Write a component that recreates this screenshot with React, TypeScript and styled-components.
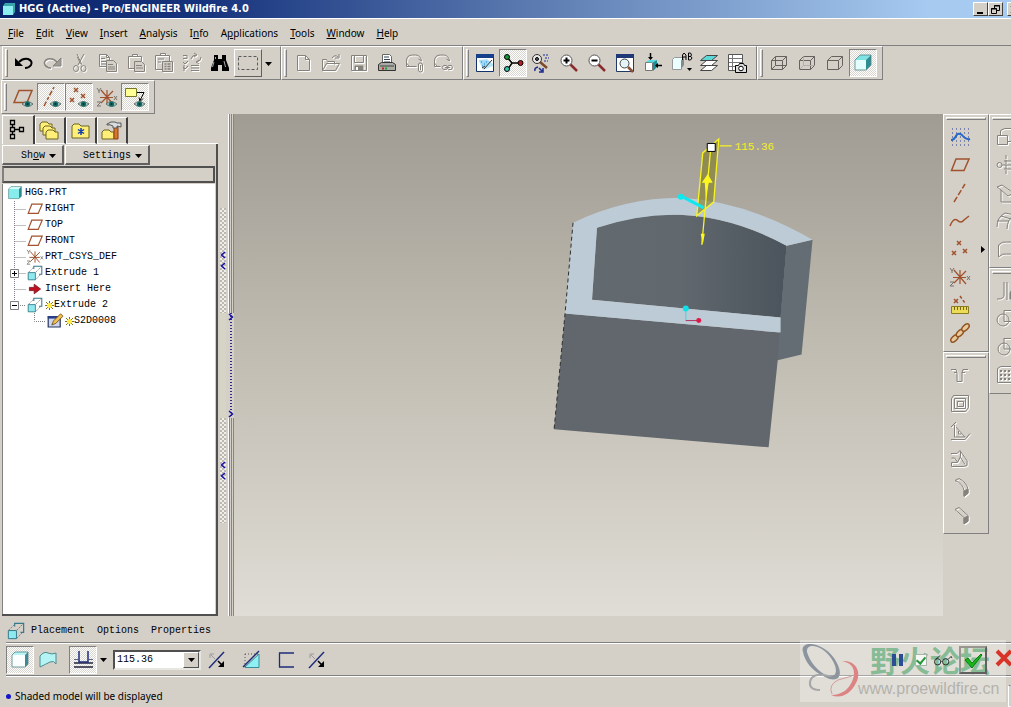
import React from "react";
import styled, { createGlobalStyle, css } from "styled-components";

const face = "#d4d0c8";
const shade = "#808080";
const uiFont = '"Noto Sans", Tahoma, sans-serif';
const monoFont = '"Liberation Mono", "Courier New", monospace';

const GlobalStyle = createGlobalStyle`
  * { box-sizing: border-box; }
  body { margin: 0; background: ${face}; font: 10px/14px ${uiFont}; color: #000; overflow: hidden; }
  button, select { font: inherit; color: inherit; margin: 0; padding: 0; border: 0; background: none; border-radius: 0; }
  svg { display: block; flex: none; }
`;

const dither = css`
  background: repeating-conic-gradient(#fff 0 25%, #d8d5ce 0 50%) 0 0 / 2px 2px;
`;

/* ---------- shell ---------- */

const Window = styled.div`
  position: relative;
  display: flex;
  flex-direction: column;
  height: 100vh;
  min-height: 560px;
  overflow: hidden;
`;

const TitleBar = styled.header`
  display: flex;
  align-items: center;
  height: 19px;
  padding-left: 2px;
  gap: 3px;
  border-bottom: 1px solid #fff;
  background: linear-gradient(90deg, #0a246a, #16337d 20%, #6080b4 55%, #a6caf0 92%);
  color: #fff;
`;

const Title = styled.h1`
  flex: 1;
  margin: 0;
  font: bold 11px/16px "DejaVu Sans Condensed", Tahoma, sans-serif;
  white-space: nowrap;
`;

const Controls = styled.div`
  display: flex;
  width: 38px;
  overflow: hidden;
`;

const ControlButton = styled.button<{ $apart?: boolean }>`
  flex: none;
  display: grid;
  place-items: center;
  width: 15px;
  height: 14px;
  margin-left: ${(p) => (p.$apart ? 4 : 0)}px;
  background: ${face};
  border: 1px solid;
  border-color: #fff #404040 #404040 #fff;
`;

const MenuBar = styled.nav`
  display: flex;
  align-items: center;
  height: 26px;
  padding: 2px 2px 0;
`;

const MenuItem = styled.button`
  padding: 0 6px;
  line-height: 16px;
`;

const ToolRow = styled.div<{ $second?: boolean }>`
  display: flex;
  height: ${(p) => (p.$second ? 34 : 35)}px;
  padding-left: ${(p) => (p.$second ? 1 : 2)}px;
  border-top: ${(p) => (p.$second ? 0 : 1)}px solid ${shade};
`;

const ToolGroup = styled.div`
  display: flex;
  align-items: center;
  padding: 0 5px 0 2px;
  border: 1px solid;
  border-color: #fff ${shade} ${shade} #fff;
`;

const Handle = styled.span`
  width: 3px;
  height: 28px;
  margin-right: 2px;
  border: 1px solid;
  border-color: #fff ${shade} ${shade} #fff;
`;

const ToolButton = styled.button<{ $on?: boolean; $raised?: boolean; $wide?: boolean }>`
  display: grid;
  flex: none;
  place-items: center;
  width: ${(p) => (p.$wide ? 32 : 28)}px;
  height: 28px;
  ${(p) => p.$on && dither}
  ${(p) => p.$on && css`border: 1px solid; border-color: ${shade} #fff #fff ${shade};`}
  ${(p) => p.$raised && css`border: 1px solid; border-color: #fff #606060 #606060 #fff;`}
`;

const AcceptButton = styled(ToolButton)`
  border: 2px solid;
  border-color: #98968f #606060 #606060 #98968f;
`;

const DropArrow = styled.button`
  display: grid;
  place-items: center;
  width: 13px;
  height: 28px;
`;

const Main = styled.main`
  display: flex;
  flex: 1;
  min-height: 0;
`;

/* ---------- icons ---------- */

const Glyph = styled.svg<{ $dim?: boolean }>`
  fill: none;
  stroke: ${(p) => (p.$dim ? "#85827c" : "#000")};
  stroke-width: 1;
  overflow: visible;
  ${(p) => p.$dim && css`filter: drop-shadow(1px 1px 0 #fff);`}
`;

const brown = "#a0522d";
const navy = "#1c2c7c";

const Eye = () => (
  <g stroke="none">
    <path d="M9 17q5-5 11 0q-5 5-11 0z" fill="#a9c4c0" stroke="#44605c" strokeWidth=".8" />
    <circle cx="14.500" cy="17" r="2.600" fill="#0f6b66" />
    <circle cx="14.500" cy="17" r="1" fill="#02302e" />
  </g>
);

const Crosses = ({ pts, c = brown }: { pts: number[][]; c?: string }) => (
  <path stroke={c} strokeWidth="1.500" d={pts.map(([x, y]) => `M${x - 2} ${y - 2}l4 4m0-4l-4 4`).join("")} />
);

const WireCube = ({ hidden }: { hidden: number }) => (
  <g stroke="#66635e">
    <path d="M2.500 7.500h11v9h-11zM2.500 7.500l4-4h11v9l-4 4M13.500 7.500l4-4" />
    {hidden > 0 && <path d="M6.500 3.500v9h11M6.500 12.500l-4 4" stroke={hidden > 1 ? "#66635e" : "#b4b0a8"} />}
  </g>
);

const Cube = ({ front, top, side, depth = 4 }: { front: string; top: string; side: string; depth?: number }) => {
  const x = 18 - depth;
  return (
    <g stroke="none">
      <path d={`M2 ${2 + depth}H${x}V17H2z`} fill={front} />
      <path d={`M2 ${2 + depth}L${2 + depth} 2H18L${x} ${2 + depth}z`} fill={top} />
      <path d={`M${x} ${2 + depth}L18 2V${17 - depth}L${x} 17z`} fill={side} />
      <path
        d={`M2 ${2 + depth}V17H${x}L18 ${17 - depth}V2H${2 + depth}z`}
        fill="none"
        stroke="#4e8488"
        strokeWidth=".8"
      />
    </g>
  );
};

const Extrude = () => (
  <g>
    <path d="M8.500 5V1.500h10v10H15" stroke="#34788c" strokeWidth="1.300" />
    <path d="M2 9l6-6M11 9l7-7M11 18l7-7" stroke="#6c7c84" strokeDasharray="2 1" />
    <path d="M1.500 9.500h9v9h-9z" fill="#8feaf0" stroke="#2a6f80" />
  </g>
);

const Csys = () => (
  <g>
    <path d="M4 3l12 14M16 4L4 16M3 10.500h13M10 3v14" stroke={brown} strokeWidth="1.200" />
    <path d="M0 1l2 3 2-3M2 4v2M17 9l3 4m0-4l-3 4M0 15h4l-4 4h4" stroke="#77736c" />
  </g>
);

const Folder = ({ x = 0, y = 0, w = 16, h = 12 }) => (
  <path
    d={`M${x} ${y + h}v-${h - 2}l2-2h5l2 2h${w - 9}v${h - 2}z`}
    fill="#ffee78"
    stroke="#6b6420"
  />
);

const Magnifier = ({ sign }: { sign: string }) => (
  <g>
    <path d="M11 11l7 7" stroke="#8b2c2c" strokeWidth="2.500" />
    <circle cx="7.500" cy="7.500" r="5.500" fill="#fff" stroke="#555" />
    <path d={sign} strokeWidth="2" />
  </g>
);

const Flip = () => (
  <g>
    <path d="M2 18L17 2" stroke={navy} strokeWidth="1.500" />
    <path d="M4 5l4 4M3 8V4h4" stroke="#999" />
    <path d="M11 11l5 5" strokeWidth="1.500" />
    <path d="M17 11v6h-6z" fill="#000" stroke="none" />
  </g>
);

const icons: Record<string, React.ReactNode> = {
  undo: <g><path d="M5 9q4-4 9-3q5 2 3 6q-2 3-6 3" strokeWidth="2" /><path d="M1 5v8h8z" fill="#000" stroke="none" /></g>,
  redo: <g><path d="M15 9q-4-4-9-3q-5 2-3 6q2 3 6 3" strokeWidth="1.500" /><path d="M19 5v8h-8z" fill="#a09c94" /></g>,
  cut: <g><path d="M7 1l5 11M14 1L8 12M7.500 4l3 7" /><ellipse cx="6" cy="15.500" rx="2.500" ry="3" /><ellipse cx="13.500" cy="15.500" rx="2.500" ry="3" /></g>,
  copy: <g><path d="M1.500 1.500h7l3 3v9h-10zM8.500 1.500v3h3M3 5.500h4M3 8.500h6M3 11h6" /><path d="M8.500 7.500h7l3 3v8h-10z" fill={face} /><path d="M10 11.500h5M10 14h7M10 16h7" /></g>,
  paste: <g><path d="M8 15.500H2.500v-12h13V8M6.500 3.500v-2h5v2z" /><path d="M8.500 8.500h7l3 3v7h-10z" fill={face} /><path d="M10 12.500h6M10 15h7" /></g>,
  pasteSpecial: <g><path d="M8 16.500H1.500v-14h14V8M6.500 2.500v-2h5v2zM4 6h6M4 9h3" /><path d="M8.500 8.500h10v10h-10z" fill={face} /><path d="M10.500 11h2m1 0h3M10.500 13.500h2m1 0h3M10.500 16h2m1 0h3" strokeWidth="1.500" /></g>,
  regen: <g><path d="M1 2.500h4v3H1M1 9l2 2 3-3M1 14l2 2 3-3M2 12v6M9 12.500h8M9 15h8M9 17.500h8M9 6q1-4 5-4m-2-2l3 2-3 2M19 4q0 4-4 5m2 2l-3-2 3-2" /></g>,
  find: <g fill="#000" stroke="none"><path d="M4 2h4v4h4V2h4v5l3 8v3h-7v-6H8v6H1v-3l3-8z" /><path d="M4 9L2.500 14M14 8l1.500 6M5.500 4v2" stroke="#aaa" /></g>,
  select: <path d="M.500 3.500h19v13h-19z" strokeDasharray="3 2" stroke="#5a5a5a" />,
  new: <path d="M4.500 2.500h8l4 4v11h-12zM12.500 2.500v4h4" />,
  open: <path d="M1.500 17.500v-11h4l1 2h7v3M1.500 17.500l4-7h13l-4 7zM11 5q3-4 6-1m-3 1h4V1" />,
  save: <g><path d="M2.500 2.500h15v15h-15zM5.500 2.500v7h9v-7" /><path d="M6 13h8v4H6z" fill="#85827c" /><path d="M8 14v3" stroke="#fff" strokeWidth="2" /></g>,
  print: <g><path d="M5.500 10V1.500h7l2 2V10" fill="#fff" stroke="#666" /><path d="M7 4h5M7 6.500h6M7 9h6" stroke="#345" /><path d="M1.500 11.500l3-2h11l3 2v6h-17z" fill="#a8aca4" stroke="#333" /><path d="M3 13h14" stroke="#444" /><path d="M5 15.500h2" stroke="#c02020" strokeWidth="2" /><path d="M8 15.500h2" stroke="#20a030" strokeWidth="2" /></g>,
  mailClip: <path d="M5 13.500H1.500V8q0-6 6-6h3q5 0 6 6l-3-2M1.500 10l3 3.500h7M13.500 11v6q0 2 2 2t2-2v-5q0-2-2-2t-2 1M15.500 12v5" />,
  mailLink: <path d="M6 13.500H1.500V8q0-6 6-6h3q5 0 6 6l-3-2M1.500 10l3 3.500h3M10.500 12.500h3q2 2 0 4h-3q-3-2 0-4zM15.500 12.500h3q2 2 0 4h-3q-3-2 0-4zM12 14.500h5" />,
  repaint: <g><path d="M1.500 1.500h17v17h-17z" fill="#fff" stroke="#103070" /><path d="M1 1h18v4H1z" fill="#15408c" stroke="none" /><path d="M3 18L4 7l8-1 6 5v7z" fill="#b8e4fa" stroke="none" /><path d="M3 6l5 11 10-4v5H3z" fill="#fff" stroke="none" /><path d="M4 7l11 1-6 8z" fill="#9cd8f6" stroke="none" /><path d="M9 16l8-9M10 13l-3 2" stroke="#333" /><path d="M6 9h1m2 2h1m-3 2h1m3-4h1" stroke="#2080d0" /></g>,
  spin: <g><path d="M4 4l5 6-4 6M9 10h8" strokeWidth="1.500" /><circle cx="4" cy="4" r="2.500" fill="#18983c" /><circle cx="4" cy="16" r="2.500" fill="#38c8b0" /><circle cx="17.500" cy="10" r="2.500" fill="#b81c24" /></g>,
  orient: <g><circle cx="6" cy="6" r="4.500" fill="#e8e8e8" stroke="#333" /><circle cx="6" cy="6" r="1.500" fill="#555" /><path d="M9 9l7 6" stroke="#7c4a28" strokeWidth="2.500" /><path d="M12 2h6M14 5h4M13 8h4" stroke="#1a2c90" strokeDasharray="2 1" /><path d="M4 18q-1-3 3-4M8 19h4v-4M11 18l-3-3" stroke="#1a2c90" strokeWidth="1.500" /></g>,
  zoomIn: <Magnifier sign="M4.500 7.500h6M7.500 4.500v6" />,
  zoomOut: <Magnifier sign="M4.500 7.500h6" />,
  refit: <g><path d="M1.500 1.500h17v17h-17z" fill="#fff" stroke="#203868" /><path d="M1 1h18v4H1z" fill="#203878" stroke="none" /><circle cx="9.500" cy="10.500" r="4.500" fill="#e4f4fa" stroke="#444" /><path d="M13 14l5 5" stroke="#8a5038" strokeWidth="2.500" /></g>,
  reorient: <g><path d="M2.500 9.500h7v8h-7z" fill="#fff" stroke="#777" /><path d="M3 9l3-2h8l-4 2.500z" fill="#52dbe0" stroke="none" /><path d="M10 9.500l4-2.500v7l-4 4z" fill="#1b8f98" stroke="none" /><path d="M7.500 0v6M13 12.500h6" strokeWidth="1.500" /><path d="M5 4h5l-2.500 3zM15 10v5l-3-2.500z" fill="#000" stroke="none" /></g>,
  saved: <g><path d="M1.500 6.500l2-2h9l-2 3v9h-9z" fill="#eaffff" stroke="#999" /><path d="M10 8l3-3v7l-3 4z" fill="#888" stroke="none" /><path d="M11.500 7V2l1.500-2 2 2v5M11.500 4h3.500M17.500 0v7h2l1.500-2-1-1.500h-2 1.500l1-1.500-1-2z" /><path d="M16 15h5l-2.500 3z" fill="#000" stroke="none" /></g>,
  layers: <g stroke="#444"><path d="M1.500 17.500l6-5h11l-6 5z" fill="#fff" /><path d="M1.500 12.500l6-5h11l-6 5z" fill="#fff" /><path d="M1.500 7.500l6-5h11l-6 5z" fill="#5cd8d8" /></g>,
  viewMgr: <g><path d="M1.500 1.500h14v16h-14z" fill="#fff" stroke="#555" /><path d="M2 5.500h13M2 9.500h13M2 13.500h8M5.500 2v15" stroke="#777" /><path d="M8.500 12.500h3l1-2h4l1 2h2v7h-11z" fill="#ddd" /><circle cx="14" cy="15.500" r="2.300" fill="#fff" /></g>,
  wire: <WireCube hidden={2} />,
  hiddenLine: <WireCube hidden={1} />,
  noHidden: <WireCube hidden={0} />,
  shaded: <Cube front="#e4fdfd" top="#7fe3e3" side="#2f8c90" depth={5} />,
  solid: <Cube front="#fafefe" top="#b8f4f4" side="#3f8a90" depth={3} />,
  part: <Cube front="#86ecec" top="#d8ffff" side="#2f8c90" depth={3} />,
  planeEye: <g><path d="M1 15.500L6 3.500h13l-5 12z" stroke={brown} strokeWidth="1.500" /><Eye /></g>,
  axisEye: <g><path d="M3 19L13 0" stroke={brown} strokeWidth="1.500" strokeDasharray="5 2 3 2" /><Eye /></g>,
  pointEye: <g><Crosses pts={[[7, 3], [3, 13], [14, 9]]} /><Eye /></g>,
  csysEye: <g><Csys /><Eye /></g>,
  noteEye: <g><path d="M.5 1.500h11v8H.5z" fill="#ffff96" stroke="#77772c" /><path d="M12 5.500h7l-4 8m-1-3l1 4 3-3" /><Eye /></g>,
  modelTree: <g strokeWidth="1.300"><path d="M2.500.5h4v4h-4zM2.500 7.500h4v4h-4zM2.500 14.500h4v4h-4zM11.500 7.500h4v4h-4zM4.500 5v2M4.500 12v2M7 9.500h4" /></g>,
  layerTree: <g><Folder x={0} y={1} w={12} h={9} /><Folder x={3} y={5} w={12} h={9} /><Folder x={6} y={9} w={12} h={9} /></g>,
  favorites: <g><Folder x={1} y={3} w={17} h={14} /><path d="M10 7v7M7 8.500l6 4M13 8.500l-6 4" stroke="#103cac" strokeWidth="1.500" /></g>,
  tools: <g><Folder x={0} y={9} w={12} h={9} /><path d="M12 6h4v12h-4z" fill="#d8762c" stroke="#8c3c10" /><path d="M5 3q4-3 8-2l2 1h4v4l-4-1v2h-4V5q-3-2-6-1z" fill="#d8dce0" stroke="#555" /></g>,
  plane: <path d="M1.500 15.500L6 4h13l-5 11.500z" stroke={brown} strokeWidth="1.500" />,
  axis: <path d="M4 19L15 1" stroke={brown} strokeWidth="1.500" strokeDasharray="6 2" />,
  curve: <path d="M0 15q3-8 7-6q4 4 7 0l5-4" stroke={brown} strokeWidth="1.500" />,
  points: <Crosses pts={[[9, 4], [4, 14], [15, 12]]} />,
  csys: <Csys />,
  sketch: <g><path d="M2 2h17M2 6h17M2 10h17M2 14h17M2 18h17" stroke="#26398c" strokeDasharray="1 3" /><path d="M1 13q3 0 5-4t6-1q4 5 8 4" stroke="#2468c8" strokeWidth="2" /></g>,
  analysis: <g><Crosses pts={[[6, 6]]} /><path d="M10 1l5 7" stroke={brown} strokeWidth="1.500" strokeDasharray="3 2" /><path d="M1.500 11.500h17v7h-17z" fill="#ecdc58" stroke="#8c7c20" /><path d="M4.500 12v3m3-3v3m3-3v3m3-3v3m3-3v3" stroke="#77691a" /></g>,
  chain: <g stroke="#925420" strokeWidth="1.500">{[[4.5, 15.5], [10, 10], [15.5, 4.5]].map(([x, y]) => <ellipse key={x} cx={x} cy={y} rx="4.500" ry="2.500" fill="#e8c8a0" transform={`rotate(-45 ${x} ${y})`} />)}</g>,
  hole: <path d="M1 4.500h5l1 3v9h5v-9l1-3h5M4 7.500h3M12 7.500h3" />,
  shell: <path d="M1.500 5.500l2-3h15v12l-3 4h-14zM4.500 5.500h11v10h-11zM7.500 8.500h6v5h-6z" />,
  rib: <path d="M1 6l5-5M4.500 4v12h11M6 6l9 10M8.500 10v3h3M1 18.500h14l5-6" />,
  draft: <path d="M1 4.500h6l3-3 7 10v5l-4 1H1.500v-4h6l3-6v-5M7.500 13l-3-4h-3M10 7.500l5 8" />,
  round: <g><path d="M5 3.500l4-2q8 4 9 11v4l-4 3v-6q-1-7-9-10z" /><path d="M14 14l4-2v4l-4 3z" fill="#85827c" /></g>,
  chamfer: <g><path d="M5 4.500l4-2 9 8v6l-4 2v-6z" /><path d="M14 13l4-2v5l-4 3z" fill="#85827c" /></g>,
  scale: <path d="M1.500 8.500h10v9h-10zM4.500 8V3.500l4-2h10v13h-7" />,
  mirror: <g><path d="M10 0v20" strokeDasharray="4 1" /><circle cx="3.500" cy="10" r="2.500" /><path d="M6 10h13M8 6h9v8H8" /></g>,
  merge: <path d="M1 4l5-2 13 9-4 8H5V7zM5 7l7 6 6-3" />,
  boundary: <path d="M1 16q0-10 8-14l10 2q-8 4-8 14M1 10h12M5 5l10 3" />,
  fill: <path d="M2.500 17.500V6q4-4 8-3h8v12h-8q-4-1-8 3z" />,
  trim: <g><path d="M8 1v13q0 4-6 4H1M11 1v18" /><path d="M14 18V12l5-9v15z" fill="#85827c" /></g>,
  intersect: <g><path d="M8 1.500h10v11H8z" /><circle cx="7" cy="11" r="6" /></g>,
  sweep: <g><circle cx="8" cy="12" r="6" /><path d="M8 1v11h11M8 1.500h10" /></g>,
  pattern: <g><path d="M1.500 3.500l3-2h14v16h-17z" /><path d="M4 6h14M4 10h14M4 14h14" strokeDasharray="2 2" strokeWidth="2" /></g>,
  extrude: <Extrude />,
  surface: <path d="M2 6q4-5 8-3t8 0v11q-2-4-6-2t-10 5z" fill="#b4f4f4" stroke="#4c8c90" />,
  symmetric: <g><path d="M1 13h19M1 17h19" stroke="#556" strokeWidth="2" /><path d="M6 1v11h9V1" stroke={navy} strokeWidth="1.500" /><path d="M1 9.500h4m11 0h4" stroke="#667" /></g>,
  flip: <Flip />,
  removeMaterial: <g><path d="M3 17L17 4v13.500H3z" fill="#8ff0f4" stroke="#3b8c98" /><path d="M3 4h13M3 4v13" stroke="#555" strokeDasharray="1 2" /><path d="M1 17L17 1" stroke={navy} strokeWidth="1.500" /></g>,
  thicken: <path d="M17 3H2.500v14H17" stroke={navy} strokeWidth="1.300" />,
  glasses: <g stroke="#222"><circle cx="4" cy="12" r="3.500" /><circle cx="13" cy="12" r="3.500" /><path d="M7.500 12q1-2 2 0M2 9l5-4M16 9l3-3 1 2" /></g>,
  accept: <path d="M2 10l3-2 4 5L18 4l1 1L9 18z" fill="#18b41c" stroke="#0b7c10" />,
  cancel: <path d="M3 3l14 14M17 3L3 17" stroke="#d83428" strokeWidth="4" />,
  arrow: <path d="M3 8h6V4l8 6-8 6v-4H3z" fill="#c01020" stroke="#781018" />,
  edit: <g><path d="M1.500 4.500h15v13h-15z" fill="#ccd6ec" stroke="#26345c" strokeWidth="1.500" /><path d="M1 4h16v3H1z" fill="#26408c" stroke="none" /><path d="M6 15l2-5 9-9 3 3-9 9z" fill="#f0c050" stroke="#6b4410" /></g>,
};

const Icon = ({ name, dim, size = 20 }: { name: string; dim?: boolean; size?: number }) => (
  <Glyph width={size} height={size} viewBox="0 0 20 20" $dim={dim} aria-hidden="true">
    {icons[name]}
  </Glyph>
);

const Triangle = ({ right }: { right?: boolean }) => (
  <svg width="7" height="7" viewBox="0 0 7 7" aria-hidden="true">
    <path d={right ? "M2 0l4 3.500L2 7z" : "M0 2h7L3.500 6z"} />
  </svg>
);

type Tool = { icon: string; label: string; dim?: boolean; on?: boolean; raised?: boolean; menu?: boolean; flyout?: boolean };

const t = (icon: string, label: string, extra: Partial<Tool> = {}): Tool => ({ icon, label, ...extra });
const dim = { dim: true };
const on = { on: true };

const ToolbarGroup = ({ tools }: { tools: Tool[] }) => (
  <ToolGroup role="toolbar">
    <Handle />
    {tools.map((tool) => (
      <React.Fragment key={tool.label}>
        <ToolButton aria-label={tool.label} $on={tool.on} $raised={tool.raised}>
          <Icon name={tool.icon} dim={tool.dim} />
        </ToolButton>
        {tool.menu && <DropArrow aria-label={`${tool.label} options`}><Triangle /></DropArrow>}
      </React.Fragment>
    ))}
  </ToolGroup>
);

/* ---------- navigator ---------- */

const Navigator = styled.aside`
  display: flex;
  flex-direction: column;
  width: 218px;
  flex: none;
  padding: 1px 0 0 2px;
  font: 10px/16px ${monoFont};
`;

const Tabs = styled.div`
  display: flex;
  align-items: flex-end;
  height: 29px;
`;

const Tab = styled.button<{ $active?: boolean }>`
  display: grid;
  place-items: center;
  width: ${(p) => (p.$active ? 33 : 31)}px;
  height: ${(p) => (p.$active ? 29 : 27)}px;
  border: solid;
  border-width: 1px 2px ${(p) => (p.$active ? 0 : 1)}px 1px;
  border-color: #fff #404040 #fff #fff;
`;

const TabFill = styled.span`
  flex: 1;
  border-bottom: 1px solid #fff;
`;

const NavBody = styled.div`
  display: flex;
  flex-direction: column;
  flex: 1;
  min-height: 0;
  padding-top: 1px;
  border-right: 2px solid #505050;
  border-bottom: 2px solid #505050;
`;

const NavButtons = styled.div`
  display: flex;
  gap: 1px;
  margin-bottom: 1px;
`;

const NavButton = styled.button<{ $long?: boolean }>`
  display: flex;
  align-items: center;
  justify-content: flex-end;
  gap: 4px;
  width: ${(p) => (p.$long ? 85 : 62)}px;
  height: 20px;
  padding: 2px 6px 0 0;
  border: solid;
  border-width: 1px 2px 2px 1px;
  border-color: #fff #606060 #606060 #fff;
`;

const TreeHeader = styled.div`
  height: 17px;
  margin-right: 1px;
  border: 2px solid;
  border-color: #505050 #505050 #505050 #808080;
`;

const Tree = styled.ul`
  flex: 1;
  margin: 1px 1px 0 0;
  padding: 1px 0;
  list-style: none;
  background: #fff;
  border-left: 1px solid #808080;
`;

const TreeRow = styled.li<{ $indent: number }>`
  display: flex;
  align-items: center;
  height: 16px;
  padding-left: ${(p) => p.$indent}px;
  gap: 2px;
  white-space: nowrap;
`;

const Guide = styled.svg`
  margin-right: -1px;
`;

const NodeLabel = styled.span`
  display: flex;
  align-items: center;
`;

const Branch = ({ kind }: { kind: string }) => (
  <Guide width="17" height="16" viewBox="0 0 17 16" fill="none" stroke="#808080" aria-hidden="true">
    <path d={kind === "leaf" || kind === "minus" ? "M5.500 0v8.500H17" : "M5.500 0v16M5.500 8.500H17"} strokeDasharray="1 1" />
    {(kind === "plus" || kind === "minus") && (
      <>
        <path d="M1.500 4.500h8v8h-8z" fill="#fff" />
        <path d={kind === "plus" ? "M3 8.500h5M5.500 6v5" : "M3 8.500h5"} stroke="#000" />
      </>
    )}
  </Guide>
);

const Star = () => (
  <svg width="9" height="9" viewBox="0 0 9 9" fill="none" aria-hidden="true">
    <path d="M4.500 0v9M0 4.500h9M1 1l7 7M8 1L1 8" stroke="#77701c" />
    <circle cx="4.500" cy="4.500" r="2.500" fill="#ffee40" />
  </svg>
);

const nodes: { label: string; icon: string; kind: string; star?: boolean }[] = [
  { label: "RIGHT", icon: "plane", kind: "line" },
  { label: "TOP", icon: "plane", kind: "line" },
  { label: "FRONT", icon: "plane", kind: "line" },
  { label: "PRT_CSYS_DEF", icon: "csys", kind: "line" },
  { label: "Extrude 1", icon: "extrude", kind: "plus" },
  { label: "Insert Here", icon: "arrow", kind: "line" },
  { label: "Extrude 2", icon: "extrude", kind: "minus", star: true },
];

/* ---------- splitter ---------- */

const Splitter = styled.div`
  display: flex;
  width: 16px;
  flex: none;
`;

const Track = styled.div<{ $rail?: boolean }>`
  display: flex;
  flex-direction: column;
  align-items: center;
  justify-content: center;
  width: ${(p) => (p.$rail ? 6 : 10)}px;
  ${(p) => p.$rail && css`background: linear-gradient(90deg, #fff 1px, #8c8478 1px 2px, ${face} 2px 3px, #8c8478 3px 4px, ${face} 4px 5px, #8c8478 5px);`}
`;

const Grip = styled.button`
  display: grid;
  place-content: center;
  gap: 3px;
  width: 6px;
  height: 105px;
  background: repeating-conic-gradient(#f0eeea 0 25%, #bcb8b0 0 50%) 0 0 / 4px 4px;
`;

const GripGap = styled.span`
  width: 6px;
  height: 105px;
  background: #d6d4c4;
`;

const RailGrip = styled.button`
  display: flex;
  flex-direction: column;
  justify-content: space-between;
  align-items: center;
  width: 6px;
  height: 105px;
  background: repeating-linear-gradient(#2c2c90 0 1px, ${face} 1px 3px) center / 2px 100% no-repeat, ${face};
`;

const Chevron = ({ left }: { left?: boolean }) => (
  <svg width="6" height="8" viewBox="0 0 6 8" fill="none" stroke="#1810a0" strokeWidth="1.500" aria-hidden="true">
    <path d={left ? "M5 1L1.500 4 5 7" : "M1 1l3.500 3L1 7"} />
  </svg>
);

/* ---------- graphics area ---------- */

const Viewport = styled.section`
  flex: 1;
  min-width: 0;
  background: linear-gradient(#a09b93, #bdb9ae 42%, #e0ddd6);
`;

const Scene = styled.svg`
  width: 100%;
  height: 100%;
`;

const Dimension = styled.text`
  font: 11px ${monoFont};
  fill: #f4f020;
`;

const Model = () => (
  <Scene viewBox="234 114 709 503" role="img" aria-label="HGG part">
    <defs>
      <linearGradient id="bore">
        <stop offset="0" stopColor="#62696f" />
        <stop offset=".45" stopColor="#61686e" />
        <stop offset="1" stopColor="#4b545c" />
      </linearGradient>
    </defs>
    <path d="M787 246l26-6-11 115-25 6z" fill="#656d74" />
    <path d="M597 228Q692 195 787 246L781 318 592 300z" fill="url(#bore)" />
    <path d="M565 314l216 19-12 115-215-18z" fill="#62676d" />
    <path d="M781 318l6-72 5 80-14 34z" fill="#656d74" />
    <path
      d="M573 223Q625 198 680 198Q746 201 813 240L787 246Q734 217 680 215Q640 214 597 228L592 300 781 318V333L565 314z"
      fill="#bccbd6"
    />
    <path d="M573 223l-8 91-11 116" stroke="#2c2f32" fill="none" strokeDasharray="4 3" />
    <path d="M703 153l16-14-5 63-17 14z" fill="#84802c" opacity=".65" />
    <path d="M703 153l-6 63 17-14 5-63-16 14zM711 148l-9 97M720 146h12" stroke="#f8f420" fill="none" strokeWidth="1.300" />
    <path d="M708 174l5 9h-4l-3 15-1-15h-3zM703 245l-2-11h4z" fill="#fff820" />
    <path d="M681 196l23 12" stroke="#10e8f0" strokeWidth="3" />
    <circle cx="681" cy="197" r="3" fill="#10e8f0" />
    <path d="M686 310v11" stroke="#38d8d8" />
    <path d="M686 321h13" stroke="#b03060" />
    <circle cx="686" cy="309" r="3" fill="#10e0e8" />
    <circle cx="699" cy="321" r="2.500" fill="#e01848" />
    <path d="M707.500 143.500h8v8h-8z" fill="#fff" stroke="#000" />
    <Dimension x="735" y="150">115.36</Dimension>
  </Scene>
);

/* ---------- right toolbars ---------- */

const SideColumn = styled.div<{ $clipped?: boolean }>`
  width: ${(p) => (p.$clipped ? 22 : 46)}px;
  flex: none;
  overflow: hidden;
`;

const SideGroup = styled.div`
  width: 46px;
  padding: 2px 0 4px;
  border: 1px solid;
  border-color: #fff ${shade} ${shade} #fff;
`;

const SideHandle = styled.span`
  display: block;
  height: 3px;
  margin: 0 2px 3px;
  border: 1px solid;
  border-color: #fff ${shade} ${shade} #fff;
`;

const SideSlot = styled.div`
  display: flex;
`;

const SideToolbar = ({ tools }: { tools: Tool[] }) => (
  <SideGroup role="toolbar">
    <SideHandle />
    {tools.map((tool) => (
      <SideSlot key={tool.label}>
        <ToolButton $wide aria-label={tool.label}><Icon name={tool.icon} dim={tool.dim} /></ToolButton>
        {tool.flyout && <DropArrow aria-label={`${tool.label} flyout`}><Triangle right /></DropArrow>}
      </SideSlot>
    ))}
  </SideGroup>
);

/* ---------- dashboard ---------- */

const PanelTabs = styled.div`
  display: flex;
  align-items: center;
  gap: 12px;
  height: 26px;
  padding: 3px 0 0 7px;
  font: 10px/14px ${monoFont};
`;

const PanelIcon = styled.span`
  margin-right: -6px;
`;

const Dashboard = styled.div`
  display: flex;
  align-items: center;
  height: 35px;
  margin-left: 6px;
  border: solid;
  border-width: 1px 0;
  border-color: ${shade} transparent #fff;
  box-shadow: inset 0 1px #fff, inset 0 -1px ${shade};
  overflow: hidden;
`;

const DashSet = styled.div<{ $gap: number; $push?: boolean }>`
  position: relative;
  z-index: 1;
  display: flex;
  align-items: center;
  gap: ${(p) => p.$gap}px;
  margin-left: ${(p) => (p.$push ? "auto" : "0")};
  margin-right: ${(p) => (p.$push ? 0 : 7)}px;
`;

const DepthField = styled.label`
  display: flex;
  width: 88px;
  height: 20px;
  margin: 0 2px 0 -4px;
  background: #fff;
  border: 2px solid;
  border-color: #505050 #e8e6e0 #e8e6e0 #505050;
`;

const DepthSelect = styled.select`
  flex: 1;
  min-width: 0;
  appearance: none;
  padding-left: 2px;
  font: 10px/16px ${monoFont};
`;

const DepthArrow = styled.span`
  display: grid;
  place-items: center;
  width: 16px;
  background: ${face};
  border: 1px solid;
  border-color: #fff #505050 #505050 #fff;
`;

const PreviewCheck = styled.input`
  appearance: none;
  display: grid;
  place-items: center;
  width: 12px;
  height: 12px;
  margin: 0;
  background: #f6f8f6;
  border: 1px solid #a8b4a8;

  &:checked::after {
    content: "";
    width: 4px;
    height: 7px;
    border: solid #28963c;
    border-width: 0 2px 2px 0;
    rotate: 40deg;
  }
`;

const Clip = styled.span`
  width: 17px;
  overflow: hidden;
`;

const Status = styled.footer`
  display: flex;
  align-items: center;
  gap: 4px;
  height: 30px;
  padding: 8px 0 0 6px;
`;

const Dot = styled.span`
  width: 5px;
  height: 5px;
  border-radius: 50%;
  background: #1414c8;
`;

const StatusEdge = styled.span`
  width: 3px;
  height: 22px;
  margin-left: auto;
  border: 1px solid;
  border-color: ${shade} ${face} #fff #fff;
`;

/* ---------- forum mark ---------- */

const Mark = styled.div`
  position: absolute;
  right: 5px;
  bottom: 5px;
  display: flex;
  width: 206px;
  height: 62px;
  background: rgba(255, 255, 255, 0.3);
  pointer-events: none;
`;

const MarkText = styled.div`
  display: flex;
  flex-direction: column;
  margin-left: -2px;
  white-space: nowrap;
`;

const MarkName = styled.span`
  padding-left: 12px;
  font: bold 30px/38px "Noto Sans CJK SC", sans-serif;
  color: rgba(72, 164, 104, 0.6);
`;

const MarkUrl = styled.span`
  font: 16px/22px "Liberation Sans", Arial, sans-serif;
  color: #b4b2ac;
`;

const menus = ["_File", "_Edit", "_View", "_Insert", "_Analysis", "I_nfo", "A_pplications", "_Tools", "_Window", "_Help"];

const Access = ({ text }: { text: string }) => {
  const [head, tail] = text.split("_");
  return <span>{head}<u>{tail[0]}</u>{tail.slice(1)}</span>;
};

export default function App() {
  return (
    <>
      <GlobalStyle />
      <Window>
        <TitleBar>
          <svg width="14" height="14" viewBox="0 0 14 14" aria-hidden="true">
            <path d="M1 4l2-3h10v9l-2 3H1z" fill="#38a4ac" />
            <path d="M1 4h10v9H1z" fill="#8ceef0" />
          </svg>
          <Title>HGG (Active) - Pro/ENGINEER Wildfire 4.0</Title>
          <Controls>
            <ControlButton aria-label="Minimize"><svg width="9" height="9"><path d="M1 7h6v2H1z" /></svg></ControlButton>
            <ControlButton aria-label="Restore"><svg width="9" height="9" fill="none" stroke="#000"><path d="M3.500 3V.5h5v5H6M3 1h6M.5 3.500h5v5h-5zM0 4h6" /></svg></ControlButton>
            <ControlButton aria-label="Close" $apart><svg width="9" height="9" stroke="#000" strokeWidth="1.500"><path d="M1 1l7 7M8 1L1 8" /></svg></ControlButton>
          </Controls>
        </TitleBar>
        <MenuBar>
          {menus.map((m) => <MenuItem key={m}><Access text={m} /></MenuItem>)}
        </MenuBar>
        <ToolRow>
          <ToolbarGroup tools={[t("undo", "Undo"), t("redo", "Redo", dim), t("cut", "Cut", dim), t("copy", "Copy", dim), t("paste", "Paste", dim), t("pasteSpecial", "Paste Special", dim), t("regen", "Regenerate", dim), t("find", "Find"), t("select", "Select", { raised: true, menu: true })]} />
          <ToolbarGroup tools={[t("new", "New", dim), t("open", "Open", dim), t("save", "Save", dim), t("print", "Print"), t("mailClip", "Mail as attachment", dim), t("mailLink", "Mail as link", dim)]} />
          <ToolbarGroup tools={[t("repaint", "Repaint"), t("spin", "Spin center", on), t("orient", "Orient mode"), t("zoomIn", "Zoom in"), t("zoomOut", "Zoom out"), t("refit", "Refit"), t("reorient", "Reorient"), t("saved", "Saved views"), t("layers", "Layers"), t("viewMgr", "View manager")]} />
          <ToolbarGroup tools={[t("wire", "Wireframe"), t("hiddenLine", "Hidden line"), t("noHidden", "No hidden"), t("shaded", "Shading", on)]} />
        </ToolRow>
        <ToolRow $second>
          <ToolbarGroup tools={[t("planeEye", "Datum planes"), t("axisEye", "Datum axes", on), t("pointEye", "Datum points", on), t("csysEye", "Coordinate systems"), t("noteEye", "Annotations", on)]} />
        </ToolRow>
        <Main>
          <Navigator>
            <Tabs>
              <Tab $active aria-label="Model tree"><Icon name="modelTree" /></Tab>
              <Tab aria-label="Folder browser"><Icon name="layerTree" /></Tab>
              <Tab aria-label="Favorites"><Icon name="favorites" /></Tab>
              <Tab aria-label="Connections"><Icon name="tools" /></Tab>
              <TabFill />
            </Tabs>
            <NavBody>
              <NavButtons>
                <NavButton><Access text="Sh_ow" /><Triangle /></NavButton>
                <NavButton $long><Access text="Settin_gs" /><Triangle /></NavButton>
              </NavButtons>
              <TreeHeader />
              <Tree>
                <TreeRow $indent={4}><Icon name="part" size={16} /><NodeLabel>HGG.PRT</NodeLabel></TreeRow>
                {nodes.map((n) => (
                  <TreeRow key={n.label} $indent={6}>
                    <Branch kind={n.kind} />
                    <Icon name={n.icon} size={16} />
                    <NodeLabel>{n.star && <Star />}{n.label}</NodeLabel>
                  </TreeRow>
                ))}
                <TreeRow $indent={26}>
                  <Branch kind="leaf" />
                  <Icon name="edit" size={16} />
                  <NodeLabel><Star />S2D0008</NodeLabel>
                </TreeRow>
              </Tree>
            </NavBody>
          </Navigator>
          <Splitter>
            <Track>
              <Grip aria-label="Collapse navigator"><Chevron left /><Chevron left /></Grip>
              <GripGap />
              <Grip aria-label="Hide navigator"><Chevron left /><Chevron left /></Grip>
            </Track>
            <Track $rail>
              <RailGrip aria-label="Expand browser"><Chevron /><Chevron /></RailGrip>
            </Track>
          </Splitter>
          <Viewport><Model /></Viewport>
          <SideColumn>
            <SideToolbar tools={[t("sketch", "Sketch"), t("plane", "Plane"), t("axis", "Axis"), t("curve", "Curve"), t("points", "Point", { flyout: true }), t("csys", "Coordinate system"), t("analysis", "Analysis"), t("chain", "Reference")]} />
            <SideToolbar tools={[t("hole", "Hole", dim), t("shell", "Shell", dim), t("rib", "Rib", dim), t("draft", "Draft", dim), t("round", "Round", dim), t("chamfer", "Chamfer", dim)]} />
          </SideColumn>
          <SideColumn $clipped>
            <SideToolbar tools={[t("scale", "Extrude", dim), t("mirror", "Revolve", dim), t("merge", "Sweep", dim), t("boundary", "Boundary blend", dim), t("fill", "Style", dim)]} />
            <SideToolbar tools={[t("trim", "Mirror", dim), t("intersect", "Merge", dim), t("sweep", "Trim", dim), t("pattern", "Pattern", dim)]} />
          </SideColumn>
        </Main>
        <PanelTabs>
          <PanelIcon><Icon name="extrude" size={18} /></PanelIcon>
          <button>Placement</button>
          <button>Options</button>
          <button>Properties</button>
        </PanelTabs>
        <Dashboard>
          <DashSet $gap={0}>
            <ToolButton $on aria-label="Solid"><Icon name="solid" /></ToolButton>
            <ToolButton aria-label="Surface"><Icon name="surface" /></ToolButton>
          </DashSet>
          <DashSet $gap={0}>
            <ToolButton $on aria-label="Symmetric depth"><Icon name="symmetric" /></ToolButton>
            <DropArrow aria-label="Depth options"><Triangle /></DropArrow>
          </DashSet>
          <DepthField>
            <DepthSelect aria-label="Depth"><option>115.36</option></DepthSelect>
            <DepthArrow><Triangle /></DepthArrow>
          </DepthField>
          <DashSet $gap={7}>
            <ToolButton aria-label="Flip depth direction"><Icon name="flip" /></ToolButton>
            <ToolButton aria-label="Remove material"><Icon name="removeMaterial" /></ToolButton>
          </DashSet>
          <DashSet $gap={2}>
            <ToolButton aria-label="Thicken sketch"><Icon name="thicken" /></ToolButton>
            <ToolButton aria-label="Flip material side"><Icon name="flip" /></ToolButton>
          </DashSet>
          <DashSet $gap={7} $push>
            <button aria-label="Pause">
              <svg width="20" height="14" viewBox="0 0 20 14"><path d="M4 1h4v12H4zM11 1h4v12h-4z" fill="#2c4c94" /></svg>
            </button>
            <PreviewCheck type="checkbox" defaultChecked aria-label="Preview" />
            <button aria-label="Verify"><Icon name="glasses" size={18} /></button>
            <AcceptButton aria-label="Accept"><Icon name="accept" /></AcceptButton>
            <Clip><button aria-label="Cancel"><Icon name="cancel" /></button></Clip>
          </DashSet>
        </Dashboard>
        <Status><Dot />Shaded model will be displayed<StatusEdge /></Status>
        <Mark>
          <svg width="60" height="62" viewBox="0 0 60 62" fill="none" aria-hidden="true">
            <path d="M3 12C-1 0 22 1 34 18C46 36 38 44 25 37C12 31 5 22 3 12zM7 12C10 22 18 32 28 36C38 38 38 28 31 18C22 5 6 2 7 12z" fill="#8c959e" fillRule="evenodd" />
            <path d="M28 36Q12 32 10 42Q9 50 20 50" stroke="#a4a6a8" strokeWidth="2" />
            <path d="M42 21C56 20 62 32 56 43C50 55 40 59 31 55C43 55 50 48 53 39C56 29 52 23 42 21z" fill="#dc8484" />
            <path d="M32 54Q28 45 38 40L52 36" stroke="#d49c98" />
          </svg>
          <MarkText>
            <MarkName>野火论坛</MarkName>
            <MarkUrl>www.proewildfire.cn</MarkUrl>
          </MarkText>
        </Mark>
      </Window>
    </>
  );
}
